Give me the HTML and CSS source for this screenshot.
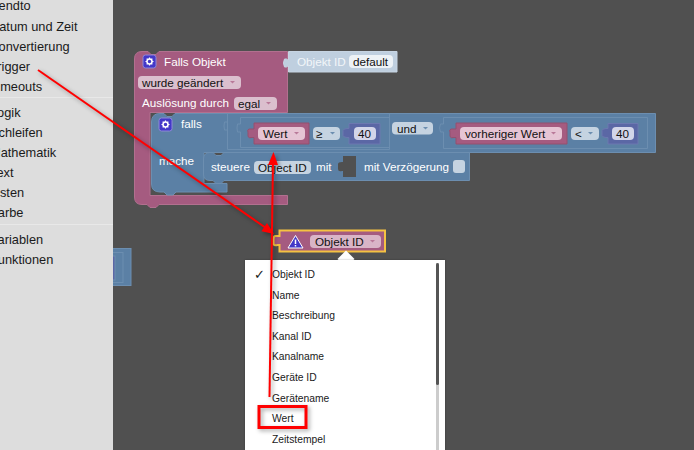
FILE: index.html
```html
<!DOCTYPE html>
<html lang="de">
<head>
<meta charset="utf-8">
<title>Blockly</title>
<link rel="stylesheet" href="styles.css">
</head>
<body>
<div class="app">
  <nav class="sidebar">
    <ul class="toolbox">
      <li class="first">Sendto</li>
      <li>Datum und Zeit</li>
      <li>Konvertierung</li>
      <li>Trigger</li>
      <li>Timeouts</li>
      <li class="sep"></li>
      <li>Logik</li>
      <li>Schleifen</li>
      <li>Mathematik</li>
      <li>Text</li>
      <li>Listen</li>
      <li>Farbe</li>
      <li class="sep lower"></li>
      <li>Variablen</li>
      <li>Funktionen</li>
    </ul>
  </nav>
  <main class="workspace">
    <svg class="canvas" width="581" height="450" viewBox="113 0 581 450" xmlns="http://www.w3.org/2000/svg">
      <defs>
        <g id="gear">
          <rect x="0" y="0" width="13" height="13" rx="2.500" class="gear-bg"/>
          <circle cx="6.500" cy="6.500" r="2.500" class="gear-ring"/>
          <path class="gear-teeth" d="M6.500 2.500v1.500M6.500 9v1.500M2.500 6.500h1.500M9 6.500h1.500M3.700 3.700l1 1M8.300 8.300l1 1M3.700 9.300l1-1M8.300 4.700l1-1"/>
        </g>
      </defs>

      <!-- fragment at the toolbox edge -->
      <rect class="blue" x="105" y="248.500" width="26" height="37"/>
      <rect class="inset" x="105" y="252.500" width="18" height="30"/>
      <rect class="navy-dim" x="105" y="256" width="10" height="24"/>

      <!-- trigger hat block -->
      <path class="purple" d="M134.500 59Q134.500 51.500 142 51.500H148l3 3h5l3-3H287.500V112.500H150V195.500H287.500V204.500H159l-3 3h-6l-3-3H142Q134.500 204.500 134.500 197Z"/>
      <use href="#gear" x="143" y="55"/>
      <text class="t white" x="164" y="66">Falls Objekt</text>
      <rect class="field pink" x="138" y="76" width="103" height="13" rx="4"/>
      <text class="t dark" x="142" y="87">wurde geändert</text>
      <path class="arrow-pink" d="M230 81h5l-2.500 2.500z"/>
      <text class="t white" x="142" y="107">Auslösung durch</text>
      <rect class="field pink" x="234" y="97" width="43" height="13" rx="4"/>
      <text class="t dark" x="238" y="108">egal</text>
      <path class="arrow-pink" d="M266 102h5l-2.500 2.500z"/>

      <!-- object id value -->
      <path class="pale" d="M288.500 51.500H397V72H288.500V65.500l-2 1.500h-2q-2-4 0-8h2l2 1.500Z"/>
      <text class="t whitish" x="297" y="66">Objekt ID</text>
      <rect class="field paler" x="349" y="55" width="44" height="13" rx="4"/>
      <text class="t dark" x="353" y="66">default</text>

      <!-- if block -->
      <path class="blue" d="M151.500 122Q151.500 113.500 160 113.500H164l3 3h5l3-3H655.500V152.500H204V183.500H227V192H176l-3 3h-6l-3-3H160Q151.500 192 151.500 184Z"/>
      <use href="#gear" x="159" y="118"/>
      <text class="t white" x="181" y="128">falls</text>
      <text class="t white" x="159" y="165">mache</text>

      <!-- value input outlines -->
      <path class="inset" d="M227.500 113.500V149.500H389.500V113.500"/>
      <path class="inset" d="M240.500 124V117.500H389M240.500 132V147.500H389"/>
      <path class="inset" d="M227.500 122h-3q-1 4 0 8h3M240.500 124h-3q-1 4 0 8h3"/>
      <path class="inset" d="M443.500 124V117.500H647.500V148.500H443.500V132M443.500 124h-3q-2 4 0 8h3"/>

      <!-- Wert -->
      <path class="rose" d="M254 123H309V144H254V137.500h-2q-3 1-4-1v-4q-1-3 1-3.500h5Z"/>
      <rect class="field pink-strong" x="258" y="127" width="47" height="13" rx="4"/>
      <text class="t dark" x="263" y="138">Wert</text>
      <path class="arrow-rose" d="M294 132h5l-2.500 2.500z"/>
      <rect class="field lightblue" x="313" y="127" width="27" height="13" rx="4"/>
      <text class="t dark" x="316" y="138">≥</text>
      <path class="arrow-blue" d="M330 132h5l-2.500 2.500z"/>
      <path class="navy" d="M349 123.500H380V144H349V137.500h-2q-3 0-4-2v-5q1-2 4-2h2Z"/>
      <rect class="field lilac" x="354" y="127" width="22" height="13" rx="4"/>
      <text class="t dark" x="358" y="138">40</text>

      <!-- und -->
      <rect class="field lightblue" x="392" y="122" width="41" height="12.500" rx="4"/>
      <text class="t dark" x="397" y="133">und</text>
      <path class="arrow-blue" d="M423 127h5l-2.500 2.500z"/>

      <!-- vorheriger Wert -->
      <path class="rose" d="M456 123H567V144H456V137.500h-2q-3 1-4-1v-4q-1-3 1-3.500h5Z"/>
      <rect class="field pink-strong" x="460" y="127" width="102" height="13" rx="4"/>
      <text class="t dark" x="465" y="138">vorheriger Wert</text>
      <path class="arrow-rose" d="M551 132h5l-2.500 2.500z"/>
      <rect class="field lightblue" x="571" y="127" width="28" height="13" rx="4"/>
      <text class="t dark" x="575" y="138">&lt;</text>
      <path class="arrow-blue" d="M588 132h5l-2.500 2.500z"/>
      <path class="navy" d="M608 123.500H638V144H608V137.500h-2q-3 0-4-2v-5q1-2 4-2h2Z"/>
      <rect class="field lilac" x="612" y="127" width="22" height="13" rx="4"/>
      <text class="t dark" x="616" y="138">40</text>

      <!-- steuere -->
      <path class="blue" d="M203.500 159Q203.500 152.500 210 152.500H213l3 3h5l3-3H469.500V180.500H224l-3 3h-5l-3-3H210Q203.500 180.500 203.500 174Z"/>
      <text class="t white" x="211" y="171">steuere</text>
      <rect class="field lightblue" x="254" y="161" width="57" height="13" rx="4"/>
      <text class="t dark" x="258" y="172">Object ID</text>
      <text class="t white" x="316" y="171">mit</text>
      <path class="socket" d="M343 156H356V177H343V171h-1q-4 1-4-2v-5q0-2 4-2h1Z"/>
      <text class="t white" x="364" y="171">mit Verzögerung</text>
      <rect class="field lightblue" x="453" y="160" width="12" height="13" rx="3"/>

      <!-- selected block -->
      <path class="selected" d="M279.500 230.500H385V251.500H279.500V245h-2q-3 1-4-1v-5q0-3 2-3h4Z"/>
      <path class="warn" d="M295.500 235.500L303 248H288Z"/>
      <path class="warn-mark" d="M295.500 239.500v4.500M295.500 245v1.500"/>
      <rect class="field pink-sel" x="310" y="235" width="71" height="13" rx="4"/>
      <text class="t dark" x="315" y="246">Objekt ID</text>
      <path class="arrow-rose" d="M370 240h5l-2.500 2.500z"/>
    </svg>

    <div class="menu-arrow"></div>
    <div class="menu">
      <ul class="menu-list">
        <li class="checked">Objekt ID</li>
        <li>Name</li>
        <li>Beschreibung</li>
        <li>Kanal ID</li>
        <li>Kanalname</li>
        <li>Geräte ID</li>
        <li>Gerätename</li>
        <li>Wert</li>
        <li>Zeitstempel</li>
      </ul>
      <div class="scrollbar"><div class="thumb"></div></div>
    </div>
  </main>

  <svg class="notes" width="694" height="450" viewBox="0 0 694 450" xmlns="http://www.w3.org/2000/svg">
    <path class="note-line" d="M38 70L266 228"/>
    <path class="note-head" d="M274 234L261.400 231.300L267 223.100Z"/>
    <path class="note-line" d="M269.500 397L273 162"/>
    <path class="note-head" d="M273.500 152L278 165L268 165Z"/>
    <rect class="note-box" x="259" y="406.500" width="47" height="21"/>
  </svg>
</div>
</body>
</html>
```

FILE: styles.css
```css
* { box-sizing: border-box; }
html, body { margin: 0; padding: 0; }
body { width: 694px; height: 450px; overflow: hidden; font-family: "Liberation Sans", Arial, sans-serif; }
.app { position: relative; display: flex; width: 694px; height: 450px; }

.sidebar { width: 113px; flex: none; background: #ddd; overflow: hidden; }
.toolbox { list-style: none; margin: -4px 0 0 -10px; padding: 0; width: 200px; color: #1a1a1a; font-size: 12.8px; }
.toolbox li { height: 20px; line-height: 20px; white-space: nowrap; }
.toolbox li.first { height: 21px; }
.toolbox li.sep { height: 6px; border-top: 1px solid #e8e8e8; }
.toolbox li.sep.lower { margin-top: 1px; }

.workspace { position: relative; flex: 1; background: #505050; overflow: hidden; }
.canvas { position: absolute; left: 0; top: 0; display: block; }

.t { font-family: "Liberation Sans", Arial, sans-serif; font-size: 11.7px; }
.white { fill: #fff; }
.whitish { fill: #f2f6f9; }
.dark { fill: #111; }

.purple { fill: #a55b80; stroke: #b2708f; stroke-width: 1; }
.blue { fill: #5b80a5; stroke: #6c8eb0; stroke-width: 1; }
.pale { fill: #bfcfdf; stroke: #c6d4e2; stroke-width: 1; }
.rose { fill: #a55b80; stroke: #94506f; stroke-width: 1; }
.navy { fill: #5b67a5; stroke: #6c78b0; stroke-width: 1; }
.navy-dim { fill: #5b67a5; stroke: #6c8eb0; stroke-width: 1; }
.inset { fill: none; stroke: #6c8eb0; stroke-width: 1; }
.socket { fill: #505050; }
.field { stroke: none; }
.pink { fill: #dbbfce; }
.pink-strong { fill: #e6c4d4; }
.pink-sel { fill: #d9b5c7; }
.paler { fill: #edf2f6; }
.lightblue { fill: #c5d3e1; }
.lilac { fill: #d3d5e9; }
.arrow-pink, .arrow-rose { fill: #b97a99; }
.arrow-blue { fill: #6c8eb0; }

.gear-bg { fill: #4338c8; stroke: #8f88d8; stroke-width: 1; }
.gear-ring { fill: none; stroke: #fff; stroke-width: 1.500; }
.gear-teeth { stroke: #fff; stroke-width: 1.200; fill: none; }

.selected { fill: #a55b80; stroke: #f5c242; stroke-width: 2; }
.warn { fill: #4338c8; stroke: #fff; stroke-width: 1; stroke-linejoin: round; }
.warn-mark { stroke: #fff; stroke-width: 1.500; fill: none; }

.menu-arrow { position: absolute; left: 227px; top: 253px; width: 12px; height: 12px; background: #fff; transform: rotate(45deg); }
.menu { position: absolute; left: 132px; top: 260px; width: 200px; height: 190px; background: #fff; overflow: hidden; box-shadow: 0 0 2px rgba(0,0,0,.3); }
.menu-list { list-style: none; margin: 4px 0 0; padding: 0; color: #1a1a1a; font-size: 10.300px; }
.menu-list li { position: relative; height: 20.600px; line-height: 22px; padding-left: 27px; white-space: nowrap; }
.menu-list li.checked::before { content: "✓"; position: absolute; left: 9px; top: 0; font-family: "DejaVu Sans", sans-serif; font-size: 13px; }
.scrollbar { position: absolute; left: 191px; top: 3px; bottom: 0; width: 3px; background: #ccc; }
.thumb { height: 122px; background: #555; border-radius: 1.500px; }

.notes { position: absolute; left: 0; top: 0; pointer-events: none; filter: drop-shadow(2px 2px 2px rgba(0,0,0,.35)); }
.note-line { stroke: #f00; stroke-width: 2; fill: none; }
.note-head { fill: #f00; }
.note-box { fill: none; stroke: #f00; stroke-width: 3; }
```
